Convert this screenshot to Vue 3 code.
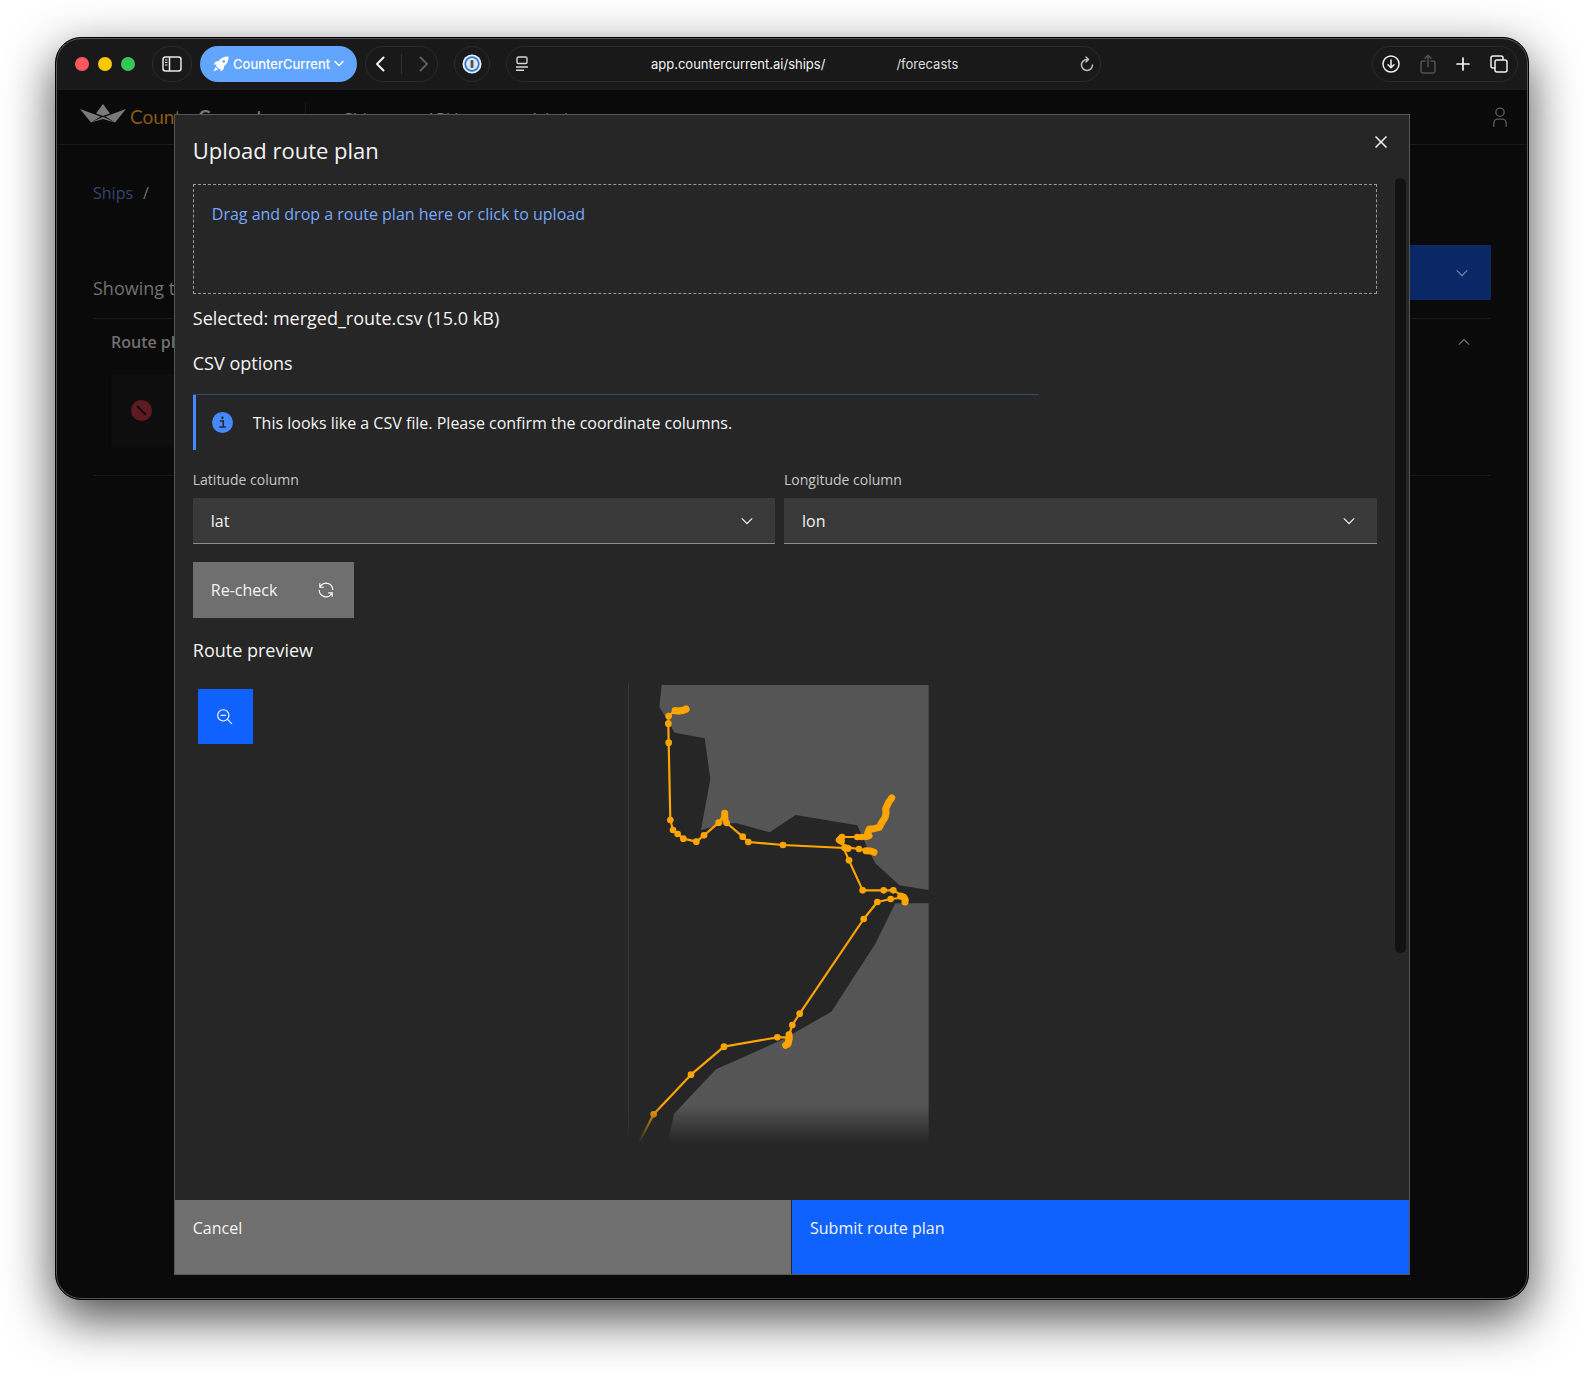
<script setup>
import { ref } from 'vue'

const latColumn = ref('lat')
const lonColumn = ref('lon')
const columns = ['lat', 'lon']

const landShapes = [
  '125,45 926,45 926,660 838,646 766,580 738,524 712,466 527,435 449,487 350,460 318,460 243,480 271,327 254,205 164,188 118,110',
  '826,700 926,700 926,1416 144,1416 162,1331 288,1198 490,1108 634,1025 766,821',
]

const legs = [
  '198,118 165,122 146,138 145,161 146,218 151,450 159,480 173,492 190,506 229,515 252,496 296,458 314,430 320,459 368,500 385,516 489,525 675,534',
  '815,384 797,416 795,442 770,474 745,484 742,500 712,501 666,501 658,512 680,532 717,537 740,541 762,546',
  '670,532 687,571 728,661 791,661 820,661 845,676 855,692 840,684 812,687 772,696 731,747 539,1031 517,1065 507,1096 498,1124 500,1102 472,1102 312,1130 213,1214 101,1333 58,1416',
]

const waypoints = [
  [198, 118], [191, 120], [184, 122], [177, 123], [171, 123], [165, 122], [146, 138], [145, 161], [146, 218],
  [151, 450], [159, 480], [173, 492], [190, 506], [229, 515], [252, 496], [296, 458], [320, 459], [368, 500],
  [385, 516], [489, 525], [666, 501], [712, 501], [725, 501], [717, 537], [687, 571], [728, 661], [791, 661],
  [820, 661], [812, 687], [772, 696], [731, 747], [539, 1031], [517, 1065], [472, 1102], [312, 1130],
  [213, 1214], [101, 1333],
]

// Densely sampled port approaches
const clusters = [
  '198,117 190,121 178,123 166,122',
  '314,430 314,438 315,446',
  '815,384 806,397 797,416 798,430 795,443 785,458 778,472 762,476 748,477 743,490 747,497 738,500',
  '662,506 658,510 664,514',
  '674,533 684,535',
  '738,542 752,543 762,547',
  '842,678 852,682 856,690 855,696',
  '507,1094 508,1104 504,1122 497,1126',
]
</script>

<template>
  <main class="window">
    <header class="toolbar">
      <div class="lights"><i class="red"></i><i class="yellow"></i><i class="green"></i></div>
      <button class="pill round" aria-label="Show sidebar">
        <svg width="20" height="16" viewBox="0 0 20 16" fill="none" stroke="#e8e8e8" stroke-width="1.5">
          <rect x="1" y="1" width="18" height="14" rx="2.5" /><path d="M7.5 1v14" /><path d="M3 4h2.5M3 6.5h2.5M3 9h2.5" stroke-width="1" />
        </svg>
      </button>
      <button class="profile">
        <svg width="16" height="16" viewBox="0 0 16 16" fill="#fff">
          <path d="M15.5.5C11 .3 8 2 5.700 5L2.800 5.400 .6 8.500l3 .1-.6 1.400 3 3 1.400-.6.1 3 3.100-2.200.4-2.900C14 8 15.700 5 15.500.5ZM10.700 6.700a1.300 1.300 0 1 1 0-2.600 1.300 1.300 0 0 1 0 2.600ZM2.600 11 .5 15.500 5 13.400Z" />
        </svg>
        <span>CounterCurrent</span>
        <svg width="10" height="7" viewBox="0 0 10 7" fill="none" stroke="#fff" stroke-width="1.500" stroke-linecap="round"><path d="m1 1.500 4 4 4-4" /></svg>
      </button>
      <div class="pill history">
        <button aria-label="Back"><svg width="10" height="16" viewBox="0 0 10 16" fill="none" stroke="#f2f2f2" stroke-width="2" stroke-linecap="round" stroke-linejoin="round"><path d="M8.500 1.500 2 8l6.500 6.500" /></svg></button>
        <i></i>
        <button aria-label="Forward"><svg width="10" height="16" viewBox="0 0 10 16" fill="none" stroke="#5c5c5c" stroke-width="2" stroke-linecap="round" stroke-linejoin="round"><path d="M1.500 1.500 8 8l-6.500 6.500" /></svg></button>
      </div>
      <button class="pill round extension" aria-label="Passwords">
        <svg width="20" height="20" viewBox="0 0 20 20">
          <circle cx="10" cy="10" r="9.500" fill="#e9f1fb" /><circle cx="10" cy="10" r="6.800" fill="#dfe8f2" stroke="#2f7ad6" stroke-width="1.800" /><rect x="8.500" y="6" width="3" height="8" rx="1" fill="#555" />
        </svg>
      </button>
      <div class="pill address">
        <svg width="14" height="16" viewBox="0 0 14 16" fill="none" stroke="#d8d8d8" stroke-width="1.400">
          <rect x="2" y="1" width="10" height="6.500" rx="1.500" /><path d="M1 11h12M1 14.300h8" />
        </svg>
        <p><span class="host">app.countercurrent.ai/ships/</span><span>/forecasts</span></p>
        <svg width="14" height="16" viewBox="0 0 14 16" fill="none" stroke="#bcbcbc" stroke-width="1.500" stroke-linecap="round" stroke-linejoin="round">
          <path d="M7 3.500a5.500 5.500 0 1 0 5.500 5.500M6 1l2.500 2.500L6 6" />
        </svg>
      </div>
      <div class="pill actions">
        <button aria-label="Downloads"><svg width="18" height="18" viewBox="0 0 18 18" fill="none" stroke="#f0f0f0" stroke-width="1.500" stroke-linecap="round" stroke-linejoin="round"><circle cx="9" cy="9" r="8" /><path d="M9 5v7.500M6 9.800l3 3 3-3" /></svg></button>
        <button aria-label="Share"><svg width="16" height="20" viewBox="0 0 16 20" fill="none" stroke="#505050" stroke-width="1.500" stroke-linecap="round" stroke-linejoin="round"><path d="M5 7H3a2 2 0 0 0-2 2v8a2 2 0 0 0 2 2h10a2 2 0 0 0 2-2V9a2 2 0 0 0-2-2h-2M8 12.500V1.500M5 4.300l3-3 3 3" /></svg></button>
        <button aria-label="New tab"><svg width="14" height="14" viewBox="0 0 14 14" stroke="#f5f5f5" stroke-width="1.700" stroke-linecap="round"><path d="M7 1v12M1 7h12" /></svg></button>
        <button aria-label="Tab overview"><svg width="18" height="18" viewBox="0 0 18 18" fill="none" stroke="#f0f0f0" stroke-width="1.500"><path d="M5 13H3a2 2 0 0 1-2-2V3a2 2 0 0 1 2-2h8a2 2 0 0 1 2 2v2" /><rect x="5" y="5" width="12" height="12" rx="2" /></svg></button>
      </div>
    </header>

    <div class="viewport">
      <div class="page">
        <div class="app-bar">
          <svg class="logo" width="46" height="20" viewBox="0 0 46 20" fill="#7a7a7a">
            <path d="M0 5 20.500 12.500 11 18.500Z" /><path d="M46 5 25.500 12.500 35 18.500Z" /><path d="M23 0 30 9.500 23 12 16 9.500Z" /><path d="M11 18.500 23 12.800 35 18.500 23 15Z" />
          </svg>
          <span class="brand">Counter<b>Current</b></span>
          <nav><a href="#">Ships</a><a href="#">API keys</a><a href="#">Admin</a></nav>
          <svg class="user" width="22" height="22" viewBox="0 0 32 32" fill="#5a5a5a">
            <path d="M16 4a5 5 0 1 1-5 5 5 5 0 0 1 5-5m0-2a7 7 0 1 0 7 7A7 7 0 0 0 16 2ZM26 30h-2v-5a5 5 0 0 0-5-5h-6a5 5 0 0 0-5 5v5H6v-5a7 7 0 0 1 7-7h6a7 7 0 0 1 7 7Z" />
          </svg>
        </div>
        <div class="content">
          <div class="crumbs"><a href="#">Ships</a><span>/</span></div>
          <div class="summary">
            <p>Showing the</p>
            <button aria-label="More actions"><svg width="18" height="18" viewBox="0 0 16 16" fill="#7888aa"><path d="M8 11 3 6l.7-.7L8 9.600l4.300-4.300.7.7z" /></svg></button>
          </div>
          <section class="accordion">
            <h2>Route plans<svg width="18" height="18" viewBox="0 0 16 16" fill="#777"><path d="m8 5 5 5-.7.7L8 6.400l-4.300 4.300L3 10z" /></svg></h2>
            <div class="plan">
              <svg width="21" height="21" viewBox="0 0 21 21"><circle cx="10.500" cy="10.500" r="10.500" fill="#5e1a20" /><path d="m6 6 9 9" stroke="#150809" stroke-width="1.800" /></svg>
            </div>
          </section>
        </div>
      </div>

      <div class="overlay">
        <div class="modal" role="dialog" aria-labelledby="modal-title">
          <div class="modal-head">
            <h1 id="modal-title">Upload route plan</h1>
            <button aria-label="Close"><svg width="24" height="24" viewBox="0 0 32 32" fill="#f4f4f4"><path d="M17.414 16 24 9.414 22.586 8 16 14.586 9.414 8 8 9.414 14.586 16 8 22.586 9.414 24 16 17.414 22.586 24 24 22.586z" /></svg></button>
          </div>
          <div class="modal-body">
            <button class="dropzone">Drag and drop a route plan here or click to upload</button>
            <p class="selected">Selected: merged_route.csv (15.0 kB)</p>
            <h3 class="options-title">CSV options</h3>
            <div class="notice">
              <svg width="21" height="21" viewBox="0 0 21 21"><circle cx="10.500" cy="10.500" r="10.500" fill="#4589ff" /><path d="M7.800 9h3.500v5.500M7.300 15h6.500" fill="none" stroke="#262626" stroke-width="1.500" /><circle cx="10.500" cy="5.800" r="1.200" fill="#262626" /></svg>
              <p>This looks like a CSV file. Please confirm the coordinate columns.</p>
            </div>
            <div class="fields">
              <div class="field">
                <label for="lat-column">Latitude column</label>
                <div class="select">
                  <select id="lat-column" v-model="latColumn"><option v-for="c in columns" :key="c">{{ c }}</option></select>
                  <svg width="18" height="18" viewBox="0 0 16 16" fill="#f4f4f4"><path d="M8 11 3 6l.7-.7L8 9.600l4.300-4.300.7.7z" /></svg>
                </div>
              </div>
              <div class="field">
                <label for="lon-column">Longitude column</label>
                <div class="select">
                  <select id="lon-column" v-model="lonColumn"><option v-for="c in columns" :key="c">{{ c }}</option></select>
                  <svg width="18" height="18" viewBox="0 0 16 16" fill="#f4f4f4"><path d="M8 11 3 6l.7-.7L8 9.600l4.300-4.300.7.7z" /></svg>
                </div>
              </div>
            </div>
            <button class="recheck">
              Re-check
              <svg width="18" height="18" viewBox="0 0 32 32" fill="#fff"><path d="M12 10H6.780A11 11 0 0 1 27 16h2A13 13 0 0 0 6 7.680V4H4v8h8ZM20 22h5.220A11 11 0 0 1 5 16H3a13 13 0 0 0 23 8.320V28h2v-8h-8Z" /></svg>
            </button>
            <h3 class="preview-title">Route preview</h3>
            <div class="preview">
              <button class="zoom-out" aria-label="Zoom out">
                <svg width="18" height="18" viewBox="0 0 32 32" fill="#fff"><path d="M8 12h10v2H8z" /><path d="M21.448 20A10.856 10.856 0 0 0 24 13a11 11 0 1 0-11 11 10.856 10.856 0 0 0 7-2.552L27.586 29 29 27.586ZM13 22a9 9 0 1 1 9-9 9.010 9.010 0 0 1-9 9Z" /></svg>
              </button>
              <svg class="map" width="302" height="458" viewBox="24 42 906 1374">
                <defs>
                  <linearGradient id="fade" x1="0" y1="0" x2="0" y2="1">
                    <stop offset="0" stop-color="#262626" stop-opacity="0" />
                    <stop offset="1" stop-color="#262626" />
                  </linearGradient>
                </defs>
                <path d="M25 42v1374" stroke="#393939" stroke-width="4" />
                <polygon v-for="s in landShapes" :key="s" :points="s" fill="#555" />
                <g fill="none" stroke="#ffa500" stroke-linejoin="round" stroke-linecap="round">
                  <polyline v-for="l in legs" :key="l" :points="l" stroke-width="6.500" />
                  <polyline v-for="c in clusters" :key="c" :points="c" stroke-width="21" />
                </g>
                <circle v-for="([x, y], i) in waypoints" :key="i" :cx="x" :cy="y" r="10" fill="#ffa500" />
                <rect x="20" y="1306" width="914" height="112" fill="url(#fade)" />
              </svg>
            </div>
            <div class="scroll-thumb"></div>
          </div>
          <div class="modal-foot">
            <button class="cancel">Cancel</button>
            <button class="submit">Submit route plan</button>
          </div>
        </div>
      </div>
    </div>
  </main>
</template>

<style>
body {
  margin: 0;
  background: #fff;
}
</style>

<style scoped>
* {
  box-sizing: border-box;
}

h1, h2, h3, p {
  margin: 0;
  font-weight: 400;
}

button {
  margin: 0;
  padding: 0;
  border: 0;
  background: none;
  color: inherit;
  font: inherit;
  text-align: left;
}

a {
  color: inherit;
  text-decoration: none;
}

svg {
  display: block;
  flex: none;
}

.window {
  margin: 37px 55px 73px;
  overflow: hidden;
  border: 1px solid #000;
  border-radius: 26px;
  background: #0a0a0a;
  box-shadow: inset 0 0 0 1px #555, 0 18px 50px rgba(0, 0, 0, 0.72);
  color: #f4f4f4;
  font: 16px/24px "Open Sans", sans-serif;
}

.toolbar {
  display: flex;
  align-items: center;
  height: 52px;
  margin: 0 1px;
  padding: 0 9px 2px 18px;
  border-top: 1px solid #555;
  border-radius: 25px 25px 0 0;
  background: #191919;
  font: 500 13px/18px Inter, sans-serif;
}

.lights {
  display: flex;
  gap: 9px;
  margin-right: 17px;
}

.lights i {
  width: 14px;
  height: 14px;
  border-radius: 50%;
}

.red { background: #ff5860; }
.yellow { background: #fdc800; }
.green { background: #34c759; }

.pill {
  display: flex;
  align-items: center;
  justify-content: center;
  height: 36px;
  border: 1px solid #2b2b2b;
  border-radius: 18px;
}

.round {
  width: 40px;
}

.profile {
  display: flex;
  align-items: center;
  gap: 4px;
  height: 36px;
  margin: 0 8px;
  padding: 0 13px;
  border-radius: 18px;
  background: #62a5ff;
  color: #fff;
}

.history {
  width: 73px;
  justify-content: space-around;
}

.history i {
  width: 1px;
  height: 20px;
  background: #303030;
}

.extension {
  width: 36px;
  margin: 0 16px;
}

.address {
  flex: 1;
  margin-right: 271px;
  padding: 0 6px 0 8px;
}

.address p {
  display: flex;
  flex: 1;
  justify-content: center;
  gap: 71px;
  color: #dedede;
}

.address .host {
  color: #f4f4f4;
}

.actions {
  width: 146px;
  justify-content: space-between;
  padding: 0 9px;
}

.viewport {
  display: grid;
}

.page,
.overlay {
  grid-area: 1 / 1;
  min-width: 0;
}

.page {
  margin: 0 1px;
}

.app-bar {
  display: flex;
  align-items: center;
  height: 55px;
  padding: 0 16px 0 23px;
  border-bottom: 1px solid #191919;
  color: #777;
}

.logo {
  margin-bottom: 6px;
}

.brand {
  margin-left: 4px;
  color: #875a12;
  font: 19px/24px Lato, sans-serif;
}

.brand b {
  color: #777;
}

.app-bar nav {
  display: flex;
  gap: 42px;
  margin-left: 42px;
  padding: 4px 0 0 38px;
  border-left: 1px solid #191919;
}

.user {
  margin-left: auto;
}

.content {
  padding: 36px 36px 0;
  color: #717171;
}

.crumbs {
  display: flex;
  gap: 10px;
}

.crumbs a {
  color: #33466e;
}

.summary {
  display: flex;
  align-items: flex-end;
  justify-content: space-between;
  margin: 40px 0 18px;
  font-size: 18px;
}

.summary button {
  display: flex;
  align-items: center;
  justify-content: flex-end;
  width: 180px;
  height: 55px;
  padding-right: 20px;
  background: #0a2766;
}

.accordion {
  padding: 11px 18px 29px;
  border: solid #191919;
  border-width: 1px 0;
}

.accordion h2 {
  display: flex;
  align-items: center;
  justify-content: space-between;
  font-size: 16px;
  font-weight: 600;
}

.plan {
  display: flex;
  align-items: center;
  width: 50%;
  height: 72px;
  margin-top: 20px;
  padding-left: 20px;
  background: #0e0e0e;
}

.overlay {
  z-index: 1;
  padding: 24px 0;
}

.modal {
  width: 84%;
  margin: 0 auto;
  border: 1px solid #565656;
  background: #262626;
}

.modal-head {
  display: flex;
  align-items: flex-start;
  justify-content: space-between;
  height: 69px;
  padding: 15px 16px 0 18px;
}

.modal-head h1 {
  padding-top: 4px;
  font-size: 22px;
  line-height: 32px;
}

.modal-body {
  position: relative;
  padding: 0 32px 58px 18px;
}

.dropzone {
  display: flex;
  width: 100%;
  height: 110px;
  padding: 17px 18px;
  border: 1px dashed #9a9a9a;
  color: #78a9ff;
}

.selected,
.options-title,
.preview-title {
  font-size: 18px;
}

.selected {
  margin-top: 12px;
}

.options-title {
  margin-top: 21px;
}

.notice {
  display: flex;
  align-items: center;
  gap: 20px;
  max-width: 846px;
  height: 56px;
  margin-top: 19px;
  padding-left: 19px;
  border-top: 1px solid #30496f;
  box-shadow: inset 3px 0 #4589ff;
}

.fields {
  display: grid;
  grid-template-columns: 582fr 593fr;
  gap: 9px;
  margin-top: 22px;
}

.field label {
  display: block;
  margin-bottom: 10px;
  color: #c6c6c6;
  font-size: 14px;
  line-height: 16px;
}

.select {
  display: flex;
  align-items: center;
}

.select select {
  flex: 1;
  height: 46px;
  padding: 0 54px 0 18px;
  border: 0;
  border-bottom: 1px solid #8d8d8d;
  border-radius: 0;
  appearance: none;
  background: #393939;
  color: #f4f4f4;
  font: inherit;
}

.select svg {
  margin: 0 19px 0 -37px;
}

.recheck {
  display: flex;
  align-items: center;
  justify-content: space-between;
  width: 161px;
  height: 56px;
  margin-top: 18px;
  padding: 0 19px 0 18px;
  background: #6f6f6f;
}

.preview-title {
  margin-top: 20px;
}

.preview {
  position: relative;
  margin-top: 22px;
  padding-right: 12px;
}

.zoom-out {
  position: absolute;
  top: 5px;
  left: 5px;
  display: flex;
  align-items: center;
  justify-content: center;
  width: 55px;
  height: 55px;
  background: #0f62fe;
}

.map {
  margin: 0 auto;
}

.scroll-thumb {
  position: absolute;
  top: -6px;
  right: 3px;
  width: 11px;
  height: 775px;
  border-radius: 6px;
  background: #121212;
}

.modal-foot {
  display: grid;
  grid-template-columns: 1fr 1fr;
}

.modal-foot button {
  display: flex;
  height: 74px;
  padding: 16px 18px;
}

.modal-foot .cancel {
  border-right: 1px solid #262626;
  background: #6f6f6f;
}

.modal-foot .submit {
  background: #0f62fe;
}
</style>
